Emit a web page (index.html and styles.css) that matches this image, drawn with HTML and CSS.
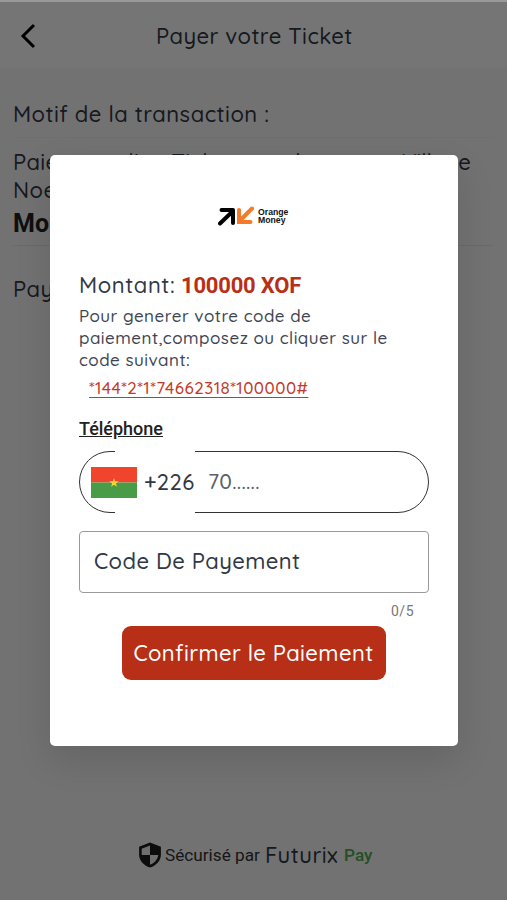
FILE: index.html
```html
<!DOCTYPE html>
<html lang="fr">
<head>
<meta charset="utf-8">
<title>Payer votre Ticket</title>
<link rel="stylesheet" href="styles.css">
</head>
<body>
<div class="page">
  <header class="bar">
    <svg class="back" viewBox="0 0 16 26" width="16" height="26"><path d="M14 2 3 13l11 11" fill="none" stroke="#000" stroke-width="3"/></svg>
    <h1 class="title">Payer votre Ticket</h1>
  </header>
  <main class="content">
    <p class="motif">Motif de la transaction :</p>
    <p class="detail"><span class="line detail-a"><span class="wide">Paiement d'un Ticket</span> pour le concert Village</span><span class="line">Noel</span></p>
    <p class="amount">Montant</p>
    <p class="pay">Payer</p>
  </main>
  <footer class="footer">
    <svg class="shield" viewBox="1 0 22 24" width="24" height="28"><path d="M12 .5 2 4.500v7c0 5.500 4 10 10 12 6-2 10-6.500 10-12v-7z" fill="#1c1c1c"/><path d="M12 3.200v8.800H4.400V6.200zM12 12h7.600c-.5 4-3.600 7.500-7.600 9z" fill="#f0f0f0"/></svg>
    <span class="secured">Sécurisé par</span><span class="brand">Futurix</span><span class="brand-pay">Pay</span>
  </footer>
</div>
<div class="overlay">
  <section class="dialog">
    <div class="logo">
      <svg viewBox="0 0 36 20" width="36" height="20"><g fill="none" stroke-width="4"><path d="M2 17.500 14.500 5.500" stroke="#000" stroke-linecap="round"/><path d="M3.500 4H15v13" stroke="#000" stroke-linecap="round" stroke-linejoin="round"/><path d="M34 2.500 22 14.500" stroke="#f47b2a" stroke-linecap="round"/><path d="M21 4v12h11.500" stroke="#f47b2a" stroke-linecap="round"/></g></svg>
      <span class="logo-text"><span class="line">Orange</span><span class="line">Money</span></span>
    </div>
    <p class="sum"><span class="sum-label">Montant:</span><span class="sum-value">100000 XOF</span></p>
    <p class="help"><span class="line">Pour generer votre code de</span><span class="line">paiement,composez ou cliquer sur le</span><span class="line">code suivant:</span></p>
    <a class="ussd">*144*2*1*74662318*100000#</a>
    <p class="phone-label">Téléphone</p>
    <div class="phone">
      <div class="prefix">
        <svg viewBox="0 0 46 31" width="46" height="31"><path fill="#f0442d" d="M0 0h46v15.500H0z"/><path fill="#489b47" d="M0 15.500h46V31H0z"/><path fill="#fbd235" d="m23 11 1.200 3.300h3.500l-2.800 2.100 1 3.400-2.900-2-2.900 2 1-3.400-2.800-2.100h3.500z"/></svg>
        <span class="dial">+226</span>
      </div>
      <span class="number">70......</span>
    </div>
    <div class="code"><span>Code De Payement</span></div>
    <p class="counter">0/5</p>
    <button class="confirm"><span>Confirmer le Paiement</span></button>
  </section>
</div>
</body>
</html>
```
FILE: styles.css
```css
* { box-sizing: border-box; }
body { margin: 0; width: 507px; height: 900px; overflow: hidden; position: relative; background: #f8f8f8; color: #303846; font-family: Quicksand, Lato, sans-serif; font-weight: 460; }
p, h1 { margin: 0; font-weight: inherit; }
.line { display: block; width: max-content; }
.page { height: 900px; display: flex; flex-direction: column; }
.bar { height: 68px; display: flex; align-items: center; padding: 4px 0 0 20px; background: #fff; }
.title { margin-left: 120px; font-size: 22px; letter-spacing: .45px; }
.content { flex: 1; padding: 32px 14px 0 13px; font-size: 22px; line-height: 28px; white-space: nowrap; }
.motif { letter-spacing: .48px; height: 38px; border-bottom: 1px solid #f1f1f1; }
.detail { margin-top: 10px; letter-spacing: .45px; }
.detail-a { letter-spacing: -.15px; }
.wide { letter-spacing: .38px; }
.amount { height: 42px; padding-top: 6px; border-bottom: 1px solid #e8e8e8; font: 700 25px/28px Roboto, sans-serif; color: #222; }
.pay { margin-top: 29px; letter-spacing: .4px; }
.footer { height: 90px; display: flex; align-items: center; padding-left: 138px; white-space: nowrap; }
.secured { margin-left: 3px; width: 100px; font: 17.200px Roboto, sans-serif; color: #333; }
.brand { width: 79px; font-size: 22px; letter-spacing: .5px; }
.brand-pay { font: 500 17.200px Roboto, sans-serif; color: #4caf50; }
.overlay { position: absolute; inset: 0; border-top: 2px solid rgba(0, 0, 0, .4); background: rgba(0, 0, 0, .54); background-clip: padding-box; display: flex; align-items: flex-start; padding: 153px 49px 0 50px; }
.dialog { width: 408px; height: 591px; padding: 48px 30px 0 29px; display: flex; flex-direction: column; background: #fff; border-radius: 5px; box-shadow: 0 14px 36px rgba(0, 0, 0, .12); white-space: nowrap; }
.logo { height: 26px; display: flex; align-items: center; gap: 4px; padding-left: 139px; }
.logo-text { font: 700 8.700px/8.500px "Liberation Sans", sans-serif; color: #111; }
.logo-text .line { height: 8.500px; }
.sum { margin-top: 41px; height: 30px; display: flex; align-items: center; font-size: 22px; }
.sum-label { width: 102px; letter-spacing: .6px; }
.sum-value { font: 700 22px Roboto, sans-serif; letter-spacing: -.2px; color: #b92e17; }
.help { margin-top: 5px; font-size: 17px; line-height: 22px; letter-spacing: .48px; color: #3e4654; }
.ussd { align-self: flex-start; margin: 6px 0 0 10px; font-size: 17px; line-height: 22px; letter-spacing: .48px; color: #c33a2a; text-decoration: underline; text-underline-offset: 3px; }
.phone-label { margin-top: 18px; font: 500 18px/24px Roboto, sans-serif; color: #222; text-decoration: underline; }
.phone { margin-top: 10px; height: 62px; flex-shrink: 0; border: 1.500px solid #333; border-radius: 31px; display: flex; align-items: center; width: 350px; }
.prefix { width: 80px; height: 64px; margin: -2px 0 -2px 35px; display: flex; align-items: center; background: #fff; }
.prefix svg { flex-shrink: 0; margin-left: -24px; }
.dial { margin: -1px 0 0 7px; font-size: 22px; letter-spacing: .4px; }
.number { margin: -2px 0 0 13px; font-size: 21px; letter-spacing: .3px; color: #59606b; }
.code { margin-top: 18px; width: 350px; height: 62px; flex-shrink: 0; border: 1.500px solid #999; border-radius: 4px; padding: 0 0 2px 14px; display: flex; align-items: center; font-size: 22px; letter-spacing: .42px; }
.counter { margin: 8px 14px 0 0; height: 20px; text-align: right; font: 14px/20px Roboto, sans-serif; letter-spacing: .5px; color: #777; }
.confirm { align-self: center; margin: 5px 0 0; width: 264px; height: 54px; padding: 0; border: 0; border-radius: 9px; background: #b62f16; color: #fff; font: 460 22px Quicksand, Lato, sans-serif; letter-spacing: .4px; }
```
